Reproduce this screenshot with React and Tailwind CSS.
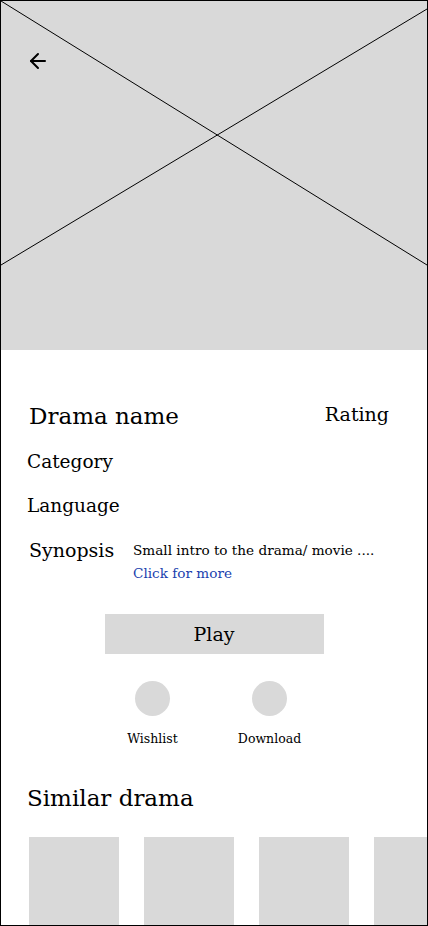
import { ArrowLeft } from 'lucide-react';

const serif = { fontFamily: '"DejaVu Serif", "Liberation Serif", serif' };

const Action = ({ label }) => (
  <div className="flex flex-col items-center w-[70px]">
    <div className="w-[35px] h-[35px] rounded-full bg-[#d9d9d9]" />
    <span className="mt-[15px] text-[12.5px] leading-4 text-black">{label}</span>
  </div>
);

export default function App() {
  return (
    <div className="w-[428px] h-[926px] overflow-hidden border border-black bg-white" style={serif}>
      {/* Cover placeholder */}
      <div className="relative h-[349px] bg-[#d9d9d9]">
        <svg className="absolute inset-0" width="426" height="349" viewBox="0 0 426 349">
          <line x1="0" y1="0" x2="426" y2="264" stroke="#000" strokeWidth="1" />
          <line x1="0" y1="264" x2="426" y2="8" stroke="#000" strokeWidth="1" />
        </svg>
        <button className="absolute left-[25px] top-[48px] text-black">
          <ArrowLeft size={24} strokeWidth={2} />
        </button>
      </div>

      {/* Details */}
      <div className="px-[26px] pt-[50px]">
        <div className="flex items-start justify-between pr-[12px]">
          <h1 className="ml-[2px] text-[23px] leading-8 text-black">Drama name</h1>
          <span className="text-[19px] leading-7 text-black">Rating</span>
        </div>
        <p className="mt-[16px] text-[18.5px] leading-7 text-black">Category</p>
        <p className="mt-[16px] text-[18.5px] leading-7 text-black">Language</p>
        <div className="mt-[16px] flex items-start">
          <span className="ml-[2px] w-[104px] text-[19px] leading-7 text-black">Synopsis</span>
          <div className="pt-[3px] text-[13.6px] leading-[23px]">
            <p className="text-black">Small intro to the drama/ movie ....</p>
            <p className="text-[#1a3fae]">Click for more</p>
          </div>
        </div>

        <div className="mt-[29px] flex justify-center">
          <button className="w-[219px] h-[40px] bg-[#d9d9d9] text-[19px] text-black">Play</button>
        </div>

        <div className="mt-[27px] flex justify-center gap-[47px] pr-[6px]">
          <Action label="Wishlist" />
          <Action label="Download" />
        </div>

        <h2 className="mt-[35px] text-[23px] leading-8 text-black">Similar drama</h2>
      </div>

      {/* Similar row */}
      <div className="mt-[23px] flex gap-[25px] pl-[28px]">
        {[0, 1, 2, 3].map((i) => (
          <div key={i} className="w-[90px] h-[90px] shrink-0 bg-[#d9d9d9]" />
        ))}
      </div>
    </div>
  );
}
